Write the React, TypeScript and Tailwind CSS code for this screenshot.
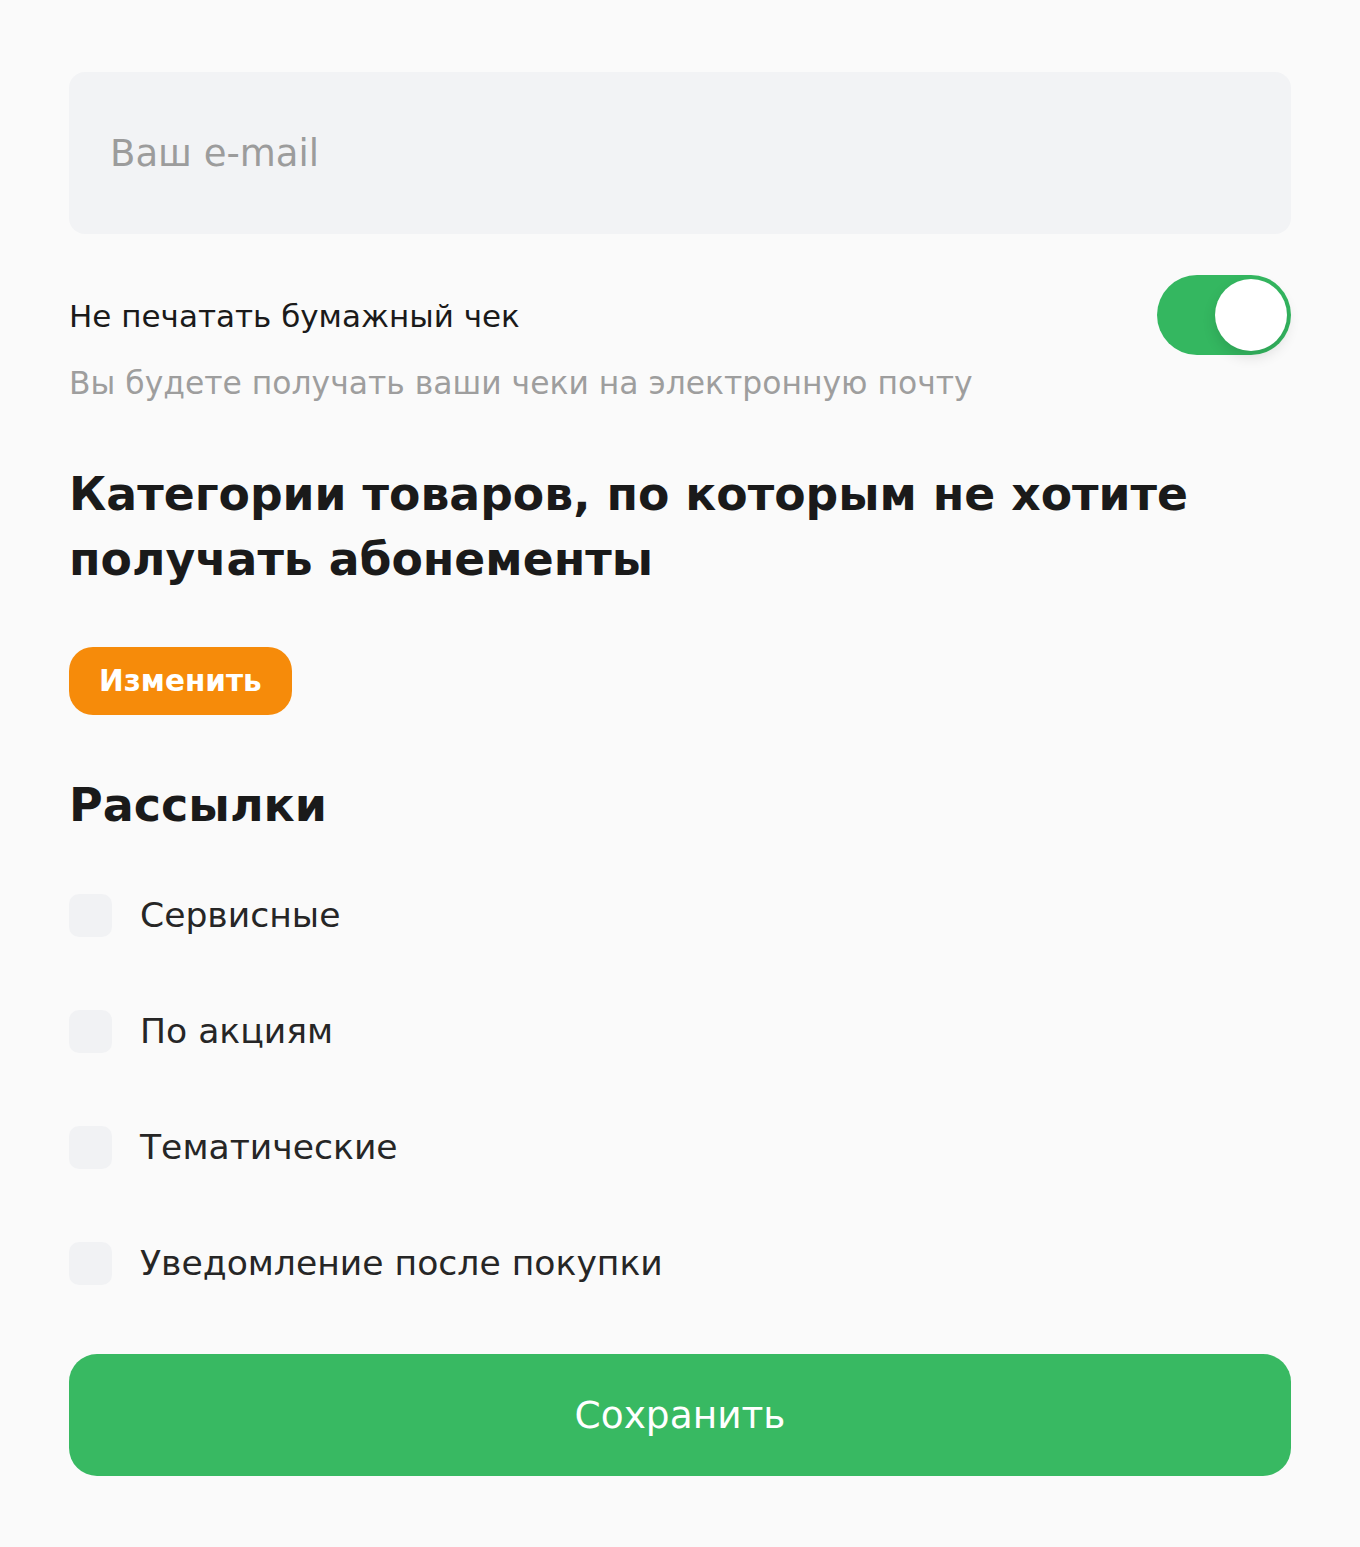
import { useState } from 'react'

const font = { fontFamily: '"DejaVu Sans", "Noto Sans", sans-serif' }

const mailings = ['Сервисные', 'По акциям', 'Тематические', 'Уведомление после покупки']

export default function App() {
  const [noPaper, setNoPaper] = useState(true)
  const [checked, setChecked] = useState<boolean[]>([false, false, false, false])

  return (
    <div className="min-h-screen bg-[#fafafa] px-[69px] pt-[72px] pb-[70px]" style={font}>
      {/* Email */}
      <input
        type="email"
        placeholder="Ваш e-mail"
        className="block w-full h-[162px] rounded-[16px] bg-[#f2f3f5] px-[41px] text-[37px] text-[#222] placeholder:text-[#9c9c9c] outline-none"
      />

      {/* Paper receipt */}
      <div className="mt-[41px] flex items-start justify-between">
        <div className="pt-[20px]">
          <div className="text-[31px] leading-[42px] text-[#1a1a1a]">Не печатать бумажный чек</div>
          <div className="mt-[25px] text-[31.4px] leading-[42px] text-[#9e9e9e]">
            Вы будете получать ваши чеки на электронную почту
          </div>
        </div>
        <button
          onClick={() => setNoPaper(!noPaper)}
          className={`relative h-[80px] w-[134px] shrink-0 rounded-full transition-colors ${
            noPaper ? 'bg-[#34b760]' : 'bg-[#dcdde0]'
          }`}
        >
          <span
            className={`absolute top-[4px] h-[72px] w-[72px] rounded-full bg-white shadow-[0_6px_14px_rgba(0,0,0,0.12)] transition-all ${
              noPaper ? 'left-[58px]' : 'left-[4px]'
            }`}
          />
        </button>
      </div>

      {/* Categories */}
      <h2 className="mt-[58px] text-[45.7px] font-bold leading-[65px] text-[#1a1a1a]">
        Категории товаров, по которым не хотите
        <br />
        получать абонементы
      </h2>
      <button className="mt-[55px] h-[68px] rounded-[24px] bg-[#f68b0a] px-[30px] text-[29.5px] font-bold text-white">
        Изменить
      </button>

      {/* Mailings */}
      <h2 className="mt-[60px] text-[46px] font-bold leading-[60px] text-[#1a1a1a]">Рассылки</h2>
      <div className="mt-[58px] flex flex-col gap-[72px]">
        {mailings.map((m, i) => (
          <label key={m} className="flex items-center gap-[28px] cursor-pointer">
            <input
              type="checkbox"
              checked={checked[i]}
              onChange={() => setChecked(checked.map((c, j) => (j === i ? !c : c)))}
              className="h-[43px] w-[43px] shrink-0 appearance-none rounded-[10px] bg-[#f1f2f4] checked:bg-[#34b760]"
            />
            <span className="text-[34.6px] leading-[44px] text-[#262626]">{m}</span>
          </label>
        ))}
      </div>

      <button className="mt-[69px] h-[122px] w-full rounded-[28px] bg-[#38b962] text-[37.5px] font-medium text-white">
        Сохранить
      </button>
    </div>
  )
}
